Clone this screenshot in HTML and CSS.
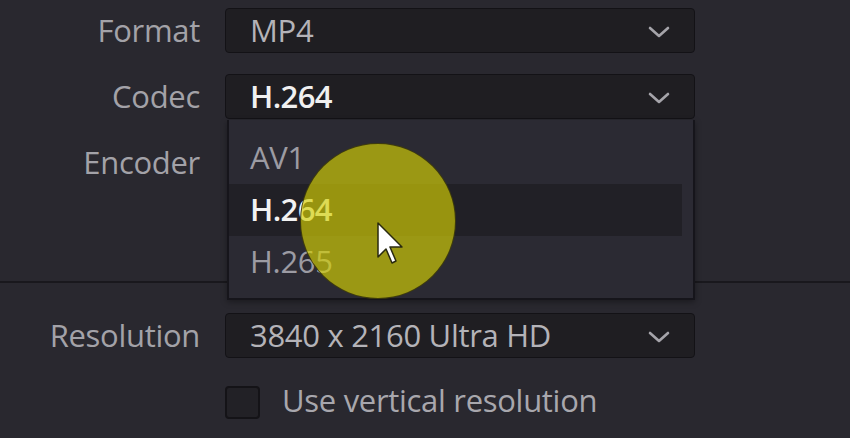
FILE: index.html
```html
<!DOCTYPE html>
<html>
<head>
<meta charset="utf-8">
<link rel="stylesheet" href="styles.css">
</head>
<body>
<div class="panel">
  <div class="group">
    <div class="row">
      <div class="label">Format</div>
      <div class="select"><span class="value">MP4</span><svg class="chev" viewBox="0 0 22 12"><path d="M2 2 L11 10 L20 2"/></svg></div>
    </div>
    <div class="row">
      <div class="label">Codec</div>
      <div class="select"><span class="value strong">H.264</span><svg class="chev" viewBox="0 0 22 12"><path d="M2 2 L11 10 L20 2"/></svg></div>
    </div>
    <div class="row">
      <div class="label">Encoder</div>
      <div class="select covered"></div>
    </div>
    <div class="menu">
      <div class="item">AV1</div>
      <div class="item active">H.264</div>
      <div class="item">H.265</div>
    </div>
  </div>
  <div class="divider"></div>
  <div class="group lower">
    <div class="row">
      <div class="label">Resolution</div>
      <div class="select"><span class="value">3840 x 2160 Ultra HD</span><svg class="chev" viewBox="0 0 22 12"><path d="M2 2 L11 10 L20 2"/></svg></div>
    </div>
    <div class="row check-row">
      <div class="label"></div>
      <label class="check"><span class="box"></span><span class="check-text">Use vertical resolution</span></label>
    </div>
  </div>
  <div class="spot"></div>
  <svg class="cursor" viewBox="-2 -2 28 44"><path d="M0 0 L0 34 L8 26 L14 40 L18 38 L12 24 L24 24 Z"/></svg>
</div>
</body>
</html>
```
FILE: styles.css
```css
html, body {
  margin: 0;
  padding: 0;
  background: #29282f;
  width: 850px;
  height: 438px;
  overflow: hidden;
  font-family: "Open Sans", "Liberation Sans", sans-serif;
}
.panel {
  position: relative;
  width: 850px;
  height: 438px;
}
.group {
  position: relative;
  display: flex;
  flex-direction: column;
  gap: 21px;
  padding-top: 8px;
}
.row {
  display: grid;
  grid-template-columns: 200px 470px;
  column-gap: 25px;
  align-items: center;
  height: 45px;
}
.label {
  text-align: right;
  color: #a3a2a8;
  font-size: 31px;
  line-height: 45px;
  letter-spacing: -0.3px;
  margin-top: -1px;
}
.select {
  position: relative;
  height: 43px;
  background: #1f1e22;
  border: 1px solid #131216;
  border-radius: 4px;
  display: flex;
  align-items: center;
  padding-left: 24px;
}
.select.covered {
  visibility: hidden;
}
.value {
  color: #b4b3b8;
  font-size: 31px;
  letter-spacing: -0.3px;
  margin-top: -2px;
}
.value.strong {
  color: #f0f0f0;
  font-weight: 600;
  letter-spacing: -0.6px;
}
.chev {
  position: absolute;
  right: 24px;
  top: 17px;
  width: 22px;
  height: 12px;
}
.chev path {
  fill: none;
  stroke: #a5a4aa;
  stroke-width: 2.6;
  stroke-linecap: round;
  stroke-linejoin: round;
}
.menu {
  position: absolute;
  left: 227px;
  top: 120px;
  width: 468px;
  height: 180px;
  background: #2b2a33;
  border: 2px solid #16151b;
  border-top: none;
  padding-top: 12px;
  box-sizing: border-box;
  box-shadow: 0 2px 6px rgba(0,0,0,0.35);
}
.item {
  height: 52px;
  line-height: 50px;
  padding-left: 21px;
  color: #9c9ba3;
  font-size: 31px;
  letter-spacing: -0.3px;
  margin-right: 11px;
}
.item.active {
  background: #212026;
  color: #f2f2f2;
  font-weight: 600;
  letter-spacing: -0.6px;
}
.divider {
  margin-top: 96px;
  height: 2px;
  background: #19181d;
}
.group.lower {
  padding-top: 30px;
  gap: 25px;
}
.check-row {
  height: 34px;
}
.check {
  display: flex;
  align-items: center;
  gap: 22px;
}
.box {
  width: 35px;
  height: 33px;
  box-sizing: border-box;
  background: #222126;
  border: 2px solid #141317;
  border-radius: 4px;
}
.check-text {
  color: #a8a7ad;
  font-size: 31px;
  letter-spacing: -0.3px;
  margin-top: -4px;
}
.spot {
  position: absolute;
  left: 300px;
  top: 143px;
  width: 156px;
  height: 156px;
  border-radius: 50%;
  background: rgba(212, 207, 5, 0.665);
  border: 1.5px solid rgba(40, 38, 10, 0.8);
  box-sizing: border-box;
}
.cursor {
  position: absolute;
  left: 376px;
  top: 221px;
  width: 28px;
  height: 44px;
}
.cursor path {
  fill: #ffffff;
  stroke: #2a2a10;
  stroke-width: 1.5;
  stroke-linejoin: round;
}
```
